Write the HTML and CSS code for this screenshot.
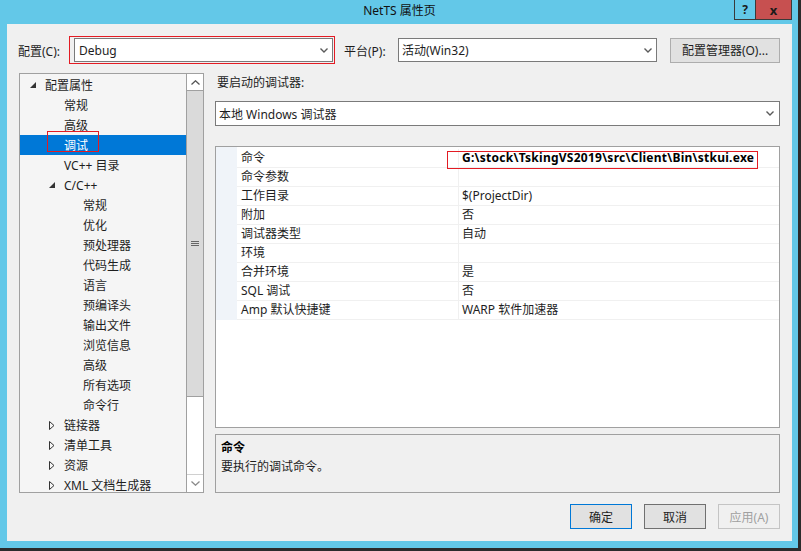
FILE: index.html
```html
<!DOCTYPE html>
<html lang="zh-CN">
<head>
    <meta charset="UTF-8">
    <title>NetTS 属性页</title>
    <link rel="stylesheet" href="styles.css">
</head>
<body>
    <div class="window">
        <div class="titlebar">
            <span></span>
            <span class="title">NetTS 属性页</span>
            <div class="tb-controls">
                <span class="tb-btn help">?</span>
                <span class="tb-btn close">x</span>
            </div>
        </div>

        <div class="client">
            <div class="toolbar">
                <span class="lbl lbl-config">配置(C):</span>
                <div class="annot-box">
                    <div class="combo">
                        <span>Debug</span>
                        <svg class="chev" width="8" height="5" viewBox="0 0 8 5"><polyline points="0.5,0.5 4,4 7.5,0.5" fill="none" stroke="#5a5a5a" stroke-width="1.4"/></svg>
                    </div>
                </div>
                <span class="lbl lbl-platform">平台(P):</span>
                <div class="combo combo-platform">
                    <span>活动(Win32)</span>
                    <svg class="chev" width="8" height="5" viewBox="0 0 8 5"><polyline points="0.5,0.5 4,4 7.5,0.5" fill="none" stroke="#5a5a5a" stroke-width="1.4"/></svg>
                </div>
                <button class="btn btn-manager">配置管理器(O)...</button>
            </div>

            <div class="main">
                <div class="tree">
                    <div class="tree-list">
                        <div class="node l0"><span class="tog"><svg width="6" height="6"><polygon points="6,0 6,6 0,6" fill="#333"/></svg></span>配置属性</div>
                        <div class="node l1"><span class="tog"></span>常规</div>
                        <div class="node l1"><span class="tog"></span>高级</div>
                        <div class="node l1 selected"><span class="tog"></span>调试<span class="mark"></span></div>
                        <div class="node l1"><span class="tog"></span>VC++ 目录</div>
                        <div class="node l1"><span class="tog"><svg width="6" height="6"><polygon points="6,0 6,6 0,6" fill="#333"/></svg></span>C/C++</div>
                        <div class="node l2"><span class="tog"></span>常规</div>
                        <div class="node l2"><span class="tog"></span>优化</div>
                        <div class="node l2"><span class="tog"></span>预处理器</div>
                        <div class="node l2"><span class="tog"></span>代码生成</div>
                        <div class="node l2"><span class="tog"></span>语言</div>
                        <div class="node l2"><span class="tog"></span>预编译头</div>
                        <div class="node l2"><span class="tog"></span>输出文件</div>
                        <div class="node l2"><span class="tog"></span>浏览信息</div>
                        <div class="node l2"><span class="tog"></span>高级</div>
                        <div class="node l2"><span class="tog"></span>所有选项</div>
                        <div class="node l2"><span class="tog"></span>命令行</div>
                        <div class="node l1"><span class="tog"><svg width="6" height="9"><polygon points="0.5,0.5 5,4.5 0.5,8.5" fill="none" stroke="#333"/></svg></span>链接器</div>
                        <div class="node l1"><span class="tog"><svg width="6" height="9"><polygon points="0.5,0.5 5,4.5 0.5,8.5" fill="none" stroke="#333"/></svg></span>清单工具</div>
                        <div class="node l1"><span class="tog"><svg width="6" height="9"><polygon points="0.5,0.5 5,4.5 0.5,8.5" fill="none" stroke="#333"/></svg></span>资源</div>
                        <div class="node l1"><span class="tog"><svg width="6" height="9"><polygon points="0.5,0.5 5,4.5 0.5,8.5" fill="none" stroke="#333"/></svg></span>XML 文档生成器</div>
                    </div>
                    <div class="vscroll">
                        <div class="sb-btn"><svg width="9" height="5" viewBox="0 0 9 5"><polyline points="0.5,4.5 4.5,0.8 8.5,4.5" fill="none" stroke="#555" stroke-width="1.3"/></svg></div>
                        <div class="sb-thumb">
                            <svg width="8" height="6"><path d="M0 0.5H8M0 2.5H8M0 4.5H8" stroke="#666" stroke-width="1"/></svg>
                        </div>
                        <div class="sb-track"></div>
                        <div class="sb-btn sb-down"><svg width="9" height="5" viewBox="0 0 9 5"><polyline points="0.5,0.5 4.5,4.2 8.5,0.5" fill="none" stroke="#8a8a8a" stroke-width="1.3"/></svg></div>
                    </div>
                </div>

                <div class="right">
                    <div class="debugger-label">要启动的调试器:</div>
                    <div class="combo combo-debugger">
                        <span>本地 Windows 调试器</span>
                        <svg class="chev" width="8" height="5" viewBox="0 0 8 5"><polyline points="0.5,0.5 4,4 7.5,0.5" fill="none" stroke="#5a5a5a" stroke-width="1.4"/></svg>
                    </div>

                    <div class="propgrid">
                        <div class="prow"><span class="strip"></span><span class="pname">命令</span><span class="pval bold">G:\stock\TskingVS2019\src\Client\Bin\stkui.exe</span></div>
                        <div class="prow"><span class="strip"></span><span class="pname">命令参数</span><span class="pval"></span></div>
                        <div class="prow"><span class="strip"></span><span class="pname">工作目录</span><span class="pval">$(ProjectDir)</span></div>
                        <div class="prow"><span class="strip"></span><span class="pname">附加</span><span class="pval">否</span></div>
                        <div class="prow"><span class="strip"></span><span class="pname">调试器类型</span><span class="pval">自动</span></div>
                        <div class="prow"><span class="strip"></span><span class="pname">环境</span><span class="pval"></span></div>
                        <div class="prow"><span class="strip"></span><span class="pname">合并环境</span><span class="pval">是</span></div>
                        <div class="prow"><span class="strip"></span><span class="pname">SQL 调试</span><span class="pval">否</span></div>
                        <div class="prow"><span class="strip"></span><span class="pname">Amp 默认快捷键</span><span class="pval">WARP 软件加速器</span></div>
                        <span class="cmd-mark"></span>
                    </div>

                    <div class="desc">
                        <div class="desc-title">命令</div>
                        <div>要执行的调试命令。</div>
                    </div>
                </div>
            </div>

            <div class="actions">
                <button class="btn btn-ok">确定</button>
                <button class="btn btn-cancel">取消</button>
                <button class="btn btn-apply">应用(A)</button>
            </div>
        </div>
    </div>
</body>
</html>
```

FILE: styles.css
```css
* { box-sizing: border-box; }
html, body { margin: 0; padding: 0; }
body { width: 801px; height: 551px; overflow: hidden; background: #2b2b2b; font-family: "Noto Sans", "Noto Sans CJK SC", sans-serif; font-size: 12px; color: #1e1e1e; }

.window { width: 798px; height: 548px; background: #63c8e8; display: flex; flex-direction: column; padding: 0 6px 7px 7px; }

.titlebar { height: 24px; display: grid; grid-template-columns: 1fr auto 1fr; align-items: start; }
.title { line-height: 22px; color: #111; }
.tb-controls { display: flex; justify-content: flex-end; }
.tb-btn { height: 20px; border: 1px solid #3a3a3a; border-top: none; display: flex; align-items: center; justify-content: center; font-weight: bold; color: #1a1a1a; font-size: 12px; }
.help { width: 22px; background: #63c8e8; }
.close { width: 37px; margin-left: -1px; background: #c75050; font-size: 13px; }

.client { flex: 1; background: #f0f0f0; padding: 0 12px; display: flex; flex-direction: column; }

.toolbar { display: flex; align-items: center; height: 28px; margin: 12px 0 0 -1px; }
.lbl { white-space: nowrap; padding-top: 1px; }
.lbl-config { width: 51px; }
.lbl-platform { width: 54px; margin-left: 9px; }
.annot-box { border: 1px solid #e31b23; padding: 1px 1px 1px 4px; }

.combo { display: flex; align-items: center; justify-content: space-between; width: 259px; height: 24px; background: #fff; border: 1px solid #7a7a7a; padding: 0 4px 0 4px; }
.combo-platform { padding-left: 3px; }
.combo-debugger { width: 565px; height: 25px; margin-top: 10px; padding-left: 3px; padding-right: 5px; }
.chev { flex: none; }

.btn { font-family: inherit; font-size: 12px; color: #1e1e1e; background: #e1e1e1; border: 1px solid #adadad; padding: 0; height: 25px; }
.btn-manager { width: 110px; margin-left: 13px; }

.main { display: flex; height: 420px; margin-top: 9px; }

.tree { width: 185px; border: 1px solid #a0a0a0; background: #f5f5f5; display: flex; overflow: hidden; }
.tree-list { flex: 1; overflow: hidden; padding-top: 1px; }
.node { position: relative; display: flex; align-items: center; height: 20px; white-space: nowrap; }
.node.l0 { padding-left: 10px; }
.node.l1 { padding-left: 29px; }
.node.l2 { padding-left: 48px; }
.tog { width: 15px; display: flex; align-items: center; }
.node.selected { background: #0078d7; color: #fff; }
.mark { position: absolute; left: 27px; top: -4px; width: 52px; height: 21px; border: 1px solid #e31b23; }

.vscroll { width: 17px; border-left: 1px solid #a0a0a0; background: #fff; display: flex; flex-direction: column; }
.sb-btn { height: 17px; display: flex; align-items: center; justify-content: center; border-bottom: 1px solid #a0a0a0; }
.sb-down { border-bottom: none; border-top: 1px solid #d0d0d0; height: 18px; }
.sb-thumb { height: 306px; background: #dadada; border-bottom: 1px solid #a0a0a0; display: flex; align-items: center; justify-content: center; }
.sb-track { flex: 1; }

.right { width: 565px; margin-left: 11px; display: flex; flex-direction: column; }
.debugger-label { height: 18px; line-height: 18px; padding-left: 2px; padding-top: 1px; }

.propgrid { position: relative; height: 282px; margin-top: 20px; padding-top: 2px; background: #fff; border: 1px solid #a0a0a0; }
.prow { display: grid; grid-template-columns: 21px 221px 1fr; height: 19px; }
.strip { background: #f0f4f9; }
.prow:first-child .strip { margin-top: -2px; }
.pname, .pval { line-height: 18px; border-bottom: 1px solid #f0f0f0; padding-left: 4px; white-space: nowrap; overflow: hidden; }
.pval { border-left: 1px solid #f0f0f0; padding-left: 3px; }
.bold { font-weight: bold; color: #000; letter-spacing: 0.25px; }
.cmd-mark { position: absolute; left: 231px; top: 4px; width: 311px; height: 18px; border: 1px solid #e31b23; }

.desc { height: 59px; margin-top: 6px; border: 1px solid #a0a0a0; background: #f0f0f0; padding: 3px 5px 0; line-height: 19px; }
.desc-title { font-weight: bold; color: #000; }

.actions { display: flex; justify-content: flex-end; gap: 12px; margin-top: 11px; }
.actions .btn { width: 62px; }
.btn-ok { border-color: #0078d7; }
.btn-cancel { border-color: #707070; }
.btn-apply { background: #f0f0f0; border-color: #c4c4c4; color: #a0a0a0; }
```
